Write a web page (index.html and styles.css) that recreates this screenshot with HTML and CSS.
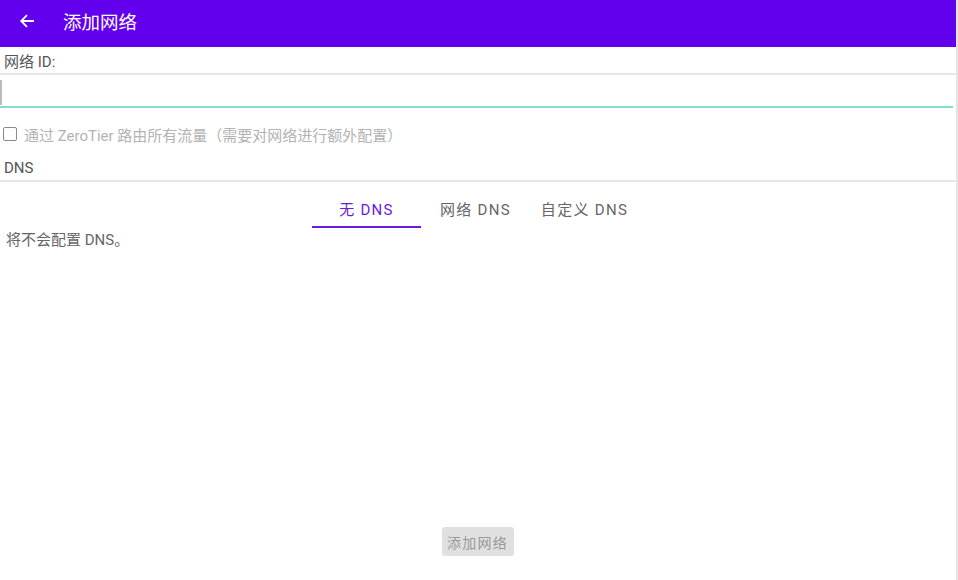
FILE: index.html
```html
<!DOCTYPE html>
<html lang="zh">
<head>
<meta charset="utf-8">
<title>添加网络</title>
<link rel="stylesheet" href="styles.css">
</head>
<body>
<div class="screen">
  <div class="main">
    <header class="appbar">
      <svg class="back" width="16" height="16" viewBox="0 0 16 16"><path d="M15 8H2.5M8 2.2L2.2 8 8 13.8" fill="none" stroke="#fff" stroke-width="1.8"/></svg>
      <span class="title">添加网络</span>
    </header>
    <div class="label-row">网络 ID:</div>
    <div class="input"><span class="cursor"></span></div>
    <label class="check-row"><span class="box"></span><span>通过 ZeroTier 路由所有流量（需要对网络进行额外配置）</span></label>
    <div class="dns-row">DNS</div>
    <div class="tabs">
      <div class="tab active">无 DNS</div>
      <div class="tab">网络 DNS</div>
      <div class="tab">自定义 DNS</div>
    </div>
    <div class="desc">将不会配置 DNS。</div>
    <div class="footer"><button class="btn">添加网络</button></div>
  </div>
  <div class="edge"></div>
</div>
</body>
</html>
```
FILE: styles.css
```css
html, body { margin: 0; padding: 0; background: #fff; }
body { font-family: Roboto, "Noto Sans CJK SC", sans-serif; color: #555; }
.screen { display: flex; width: 958px; height: 580px; overflow: hidden; }
.main { width: 956px; display: flex; flex-direction: column; }
.edge { width: 2px; background: #e4e4e4; }
.appbar { height: 47px; box-sizing: border-box; padding-bottom: 5px; background: #6200ee; display: flex; align-items: center; color: #fff; }
.back { margin-left: 19px; }
.title { margin-left: 28px; font-size: 18.5px; }
.label-row { height: 25px; border-bottom: 2px solid #e6e6e6; font-size: 15px; padding-left: 4px; display: flex; align-items: center; margin-top: 1px; }
.input { height: 31px; border-bottom: 2px solid #7fe0d2; margin-right: 3px; display: flex; align-items: center; }
.cursor { width: 2px; height: 25px; background: #bbb; margin-top: 4px; }
.check-row { height: 34px; margin-top: 9px; display: flex; align-items: center; font-size: 15px; color: #b3b3b3; }
.box { width: 12px; height: 12px; border: 1.6px solid #8a8a8a; border-radius: 2px; margin: 0 7px 0 3px; }
.dns-row { height: 25px; border-bottom: 2px solid #e6e6e6; margin-top: 4px; font-size: 15px; padding-left: 4px; display: flex; align-items: center; color: #555; }
.tabs { height: 46px; display: flex; justify-content: center; margin-left: -5px; }
.tab { width: 109px; display: flex; align-items: center; justify-content: center; padding-top: 8px; box-sizing: border-box; font-size: 15px; letter-spacing: 1.3px; color: #666; border-bottom: 2px solid transparent; }
.tab.active { color: #6a1be0; border-bottom-color: #6a1be0; }
.desc { font-size: 15px; padding-left: 6px; height: 21px; display: flex; align-items: center; color: #666; }
.footer { flex: 1; display: flex; align-items: flex-end; justify-content: center; padding-bottom: 24px; }
.btn { width: 72px; height: 29px; border: 0; border-radius: 3px; background: #e0e0e0; color: #999; font-family: inherit; font-size: 14px; letter-spacing: 1.3px; padding: 0; margin-left: -1px; }
```
